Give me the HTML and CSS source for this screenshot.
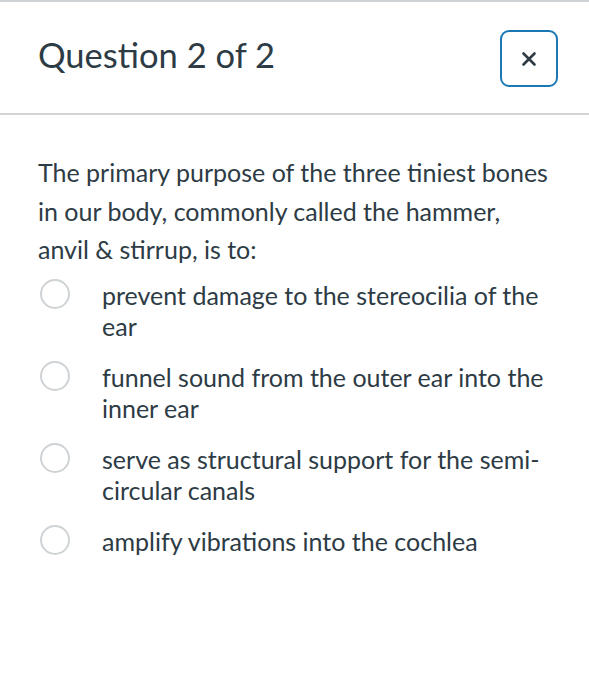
FILE: index.html
```html
<!DOCTYPE html>
<html lang="en">
<head>
<meta charset="utf-8">
<link rel="stylesheet" href="styles.css">
</head>
<body>
<div class="modal">
  <header class="header">
    <h1 class="title">Question 2 of 2</h1>
    <button class="close" aria-label="Close">
      <svg width="16" height="16" viewBox="0 0 16 16"><path d="M2.5 2.5 L13.5 13.5 M13.5 2.5 L2.5 13.5" stroke="#2d3b45" stroke-width="2.6" stroke-linecap="round"/></svg>
    </button>
  </header>
  <main class="body">
    <p class="question">The primary purpose of the three tiniest bones in our body, commonly called the hammer, anvil &amp; stirrup, is to:</p>
    <ul class="options">
      <li class="option"><span class="radio"></span><span class="label">prevent damage to the stereocilia of the ear</span></li>
      <li class="option"><span class="radio"></span><span class="label">funnel sound from the outer ear into the inner ear</span></li>
      <li class="option"><span class="radio"></span><span class="label">serve as structural support for the semi-circular canals</span></li>
      <li class="option"><span class="radio"></span><span class="label">amplify vibrations into the cochlea</span></li>
    </ul>
  </main>
</div>
</body>
</html>
```
FILE: styles.css
```css
* { box-sizing: border-box; }
html, body { margin: 0; padding: 0; background: #fff; }
body { font-family: Lato, "Noto Sans", sans-serif; color: #2d3b45; width: 589px; }
.modal { border-top: 2px solid #cfd2d4; }
.header {
  display: flex;
  align-items: center;
  justify-content: space-between;
  height: 113px;
  padding: 0 31px 0 38px;
  border-bottom: 2px solid #d2d5d7;
}
.title { margin: 0; font-size: 34.5px; font-weight: 400; line-height: 1; padding-bottom: 4px; }
.close {
  width: 58px; height: 57px;
  border: 2px solid #1b78b5;
  border-radius: 9px;
  background: #fff;
  display: flex; align-items: center; justify-content: center;
  padding: 0;
  margin-top: 2px;
}
.body { padding: 38px 38px 0 38px; }
.question { margin: 0; font-size: 25px; line-height: 38.5px; }
.options { list-style: none; margin: 11px 0 0; padding: 0; display: flex; flex-direction: column; gap: 20px; }
.option { display: flex; align-items: flex-start; }
.radio {
  flex: none;
  width: 30px; height: 30px;
  border: 2px solid #cfd3d6;
  border-radius: 50%;
  margin: -1px 32px 0 2px;
}
.label { font-size: 25px; line-height: 31px; }
```
